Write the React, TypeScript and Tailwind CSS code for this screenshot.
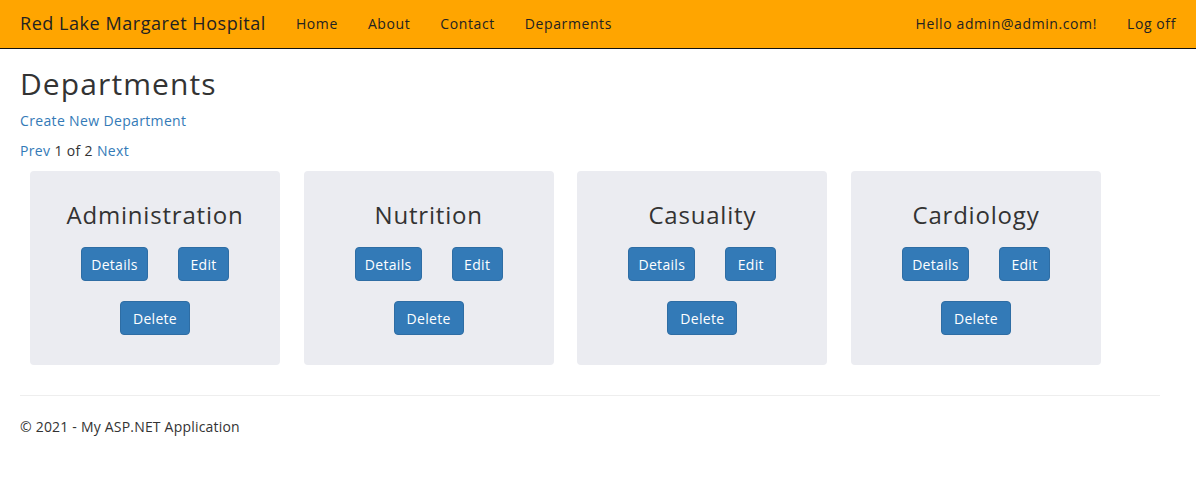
import React from 'react';

const departments = ['Administration', 'Nutrition', 'Casuality', 'Cardiology'];

const Btn: React.FC<{ label: string; className?: string }> = ({ label, className = '' }) => (
  <a
    href="#"
    className={`inline-flex items-center justify-center h-[34px] rounded-[4px] border border-[#2e6da4] bg-[#337ab7] text-white text-[14px] tracking-[0.3px] ${className}`}
  >
    {label}
  </a>
);

const App: React.FC = () => {
  return (
    <div className="min-h-[484px] bg-white text-[#333] text-[14px] tracking-[0.35px]" style={{ fontFamily: '"Open Sans", "Noto Sans", sans-serif' }}>
      {/* Navbar */}
      <nav className="h-[49px] bg-[#ffa500] border-b border-[#111] flex items-center px-5 pb-[2px] text-[#222] tracking-[0.6px]">
        <a href="#" className="text-[18px] tracking-[0.55px] text-[#222] mr-[15px]">Red Lake Margaret Hospital</a>
        <ul className="flex">
          <li><a href="#" className="px-[15px]">Home</a></li>
          <li><a href="#" className="px-[15px]">About</a></li>
          <li><a href="#" className="px-[15px]">Contact</a></li>
          <li><a href="#" className="px-[15px]">Deparments</a></li>
        </ul>
        <ul className="flex ml-auto">
          <li><a href="#" className="px-[15px]">Hello admin@admin.com!</a></li>
          <li><a href="#" className="pl-[15px] pr-0">Log off</a></li>
        </ul>
      </nav>

      <div className="px-5">
        <h2 className="text-[30px] leading-[1.1] tracking-[1.1px] mt-[18px] mb-[10px] text-[#333]">Departments</h2>
        <p className="mb-[9px]">
          <a href="#" className="text-[#337ab7]">Create New Department</a>
        </p>
        <p className="mb-[10px]">
          <a href="#" className="text-[#337ab7]">Prev</a> 1 of 2 <a href="#" className="text-[#337ab7]">Next</a>
        </p>

        <div className="flex gap-[23.67px] ml-[10px]">
          {departments.map((d) => (
            <div key={d} className="w-[250px] h-[194px] rounded-[4px] bg-[#ebecf1] flex flex-col items-center pt-[31px]">
              <h3 className="text-[24px] leading-[1.1] tracking-[0.8px] mb-[19px] text-[#333]">{d}</h3>
              <div className="flex gap-[30px]">
                <Btn label="Details" className="w-[67px]" />
                <Btn label="Edit" className="w-[51px]" />
              </div>
              <Btn label="Delete" className="w-[70px] mt-[20px]" />
            </div>
          ))}
        </div>

        <hr className="w-[1140px] mt-[30px] border-t border-[#eee]" />
        <footer className="mt-[20px] tracking-[0.2px]">
          <p>© 2021 - My ASP.NET Application</p>
        </footer>
      </div>
    </div>
  );
};

export default App;
